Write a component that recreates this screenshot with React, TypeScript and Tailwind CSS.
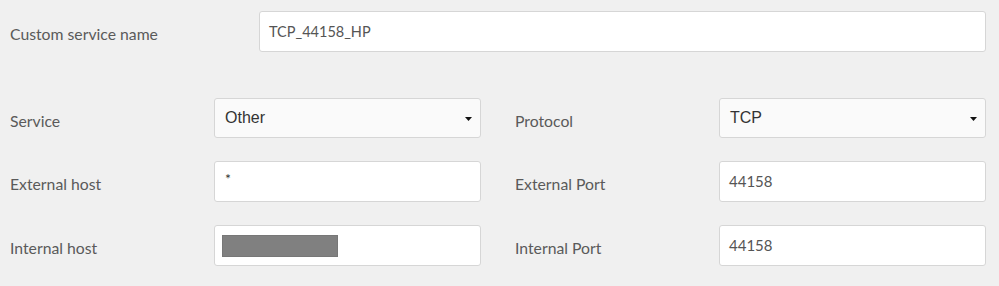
import { ReactNode } from "react";

const labelCls =
  "w-[204px] shrink-0 pt-[5px] text-[15.75px] text-[#5a5a5a] font-['Lato',sans-serif]";
const boxCls =
  "h-[41px] w-[267px] bg-white border border-[#d6d6d6] rounded-[3px] flex items-center px-[9px] text-[15px] text-[#555] font-['Lato',sans-serif]";

function Field({ label, children }: { label: string; children: ReactNode }) {
  return (
    <div className="flex items-center">
      <div className={labelCls}>{label}</div>
      {children}
    </div>
  );
}

function Select({ value }: { value: string }) {
  return (
    <div className="h-[40px] w-[267px] bg-[#fafafa] border border-[#d6d6d6] rounded-[3px] flex items-center justify-between pl-[10px] pr-[8px] text-[16px] text-[#333] font-['Liberation_Sans',sans-serif]">
      <span className="-mt-[1px]">{value}</span>
      <svg width="7" height="4" viewBox="0 0 7 4" className="mt-[1px]">
        <path d="M0 0h7L3.5 4z" fill="#111" />
      </svg>
    </div>
  );
}

export default function App() {
  return (
    <div className="w-[999px] h-[286px] bg-[#f0f0f0] pt-[11px] pl-[10px]">
      <div className="flex items-center">
        <div className="w-[249px] shrink-0 pt-[5px] text-[15.75px] text-[#5a5a5a] font-['Lato',sans-serif]">
          Custom service name
        </div>
        <div className="h-[41px] w-[727px] bg-white border border-[#d6d6d6] rounded-[3px] flex items-center px-[9px] text-[14.5px] text-[#555] font-['Lato',sans-serif]">
          TCP_44158_HP
        </div>
      </div>

      <div className="mt-[46px] flex gap-[34px]">
        <div className="flex flex-col gap-[23px]">
          <Field label="Service">
            <Select value="Other" />
          </Field>
          <Field label="External host">
            <div className={boxCls + " !px-[10px]"}>
              <span className="-mt-[6px] text-[14px] text-[#333]">*</span>
            </div>
          </Field>
          <Field label="Internal host">
            <div className={boxCls + " !px-[7px]"}>
              <div className="w-[116px] h-[22px] bg-[#808080] border border-[#777]" />
            </div>
          </Field>
        </div>
        <div className="flex flex-col gap-[23px]">
          <Field label="Protocol">
            <Select value="TCP" />
          </Field>
          <Field label="External Port">
            <div className={boxCls}>44158</div>
          </Field>
          <Field label="Internal Port">
            <div className={boxCls}>44158</div>
          </Field>
        </div>
      </div>
    </div>
  );
}
